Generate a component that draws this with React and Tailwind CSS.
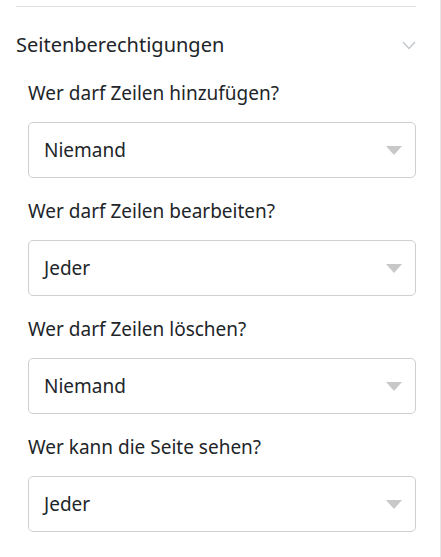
import React from 'react';

const fields = [
  { label: 'Wer darf Zeilen hinzufügen?', value: 'Niemand' },
  { label: 'Wer darf Zeilen bearbeiten?', value: 'Jeder' },
  { label: 'Wer darf Zeilen löschen?', value: 'Niemand' },
  { label: 'Wer kann die Seite sehen?', value: 'Jeder' },
];

const Select = ({ value }) => (
  <div className="flex h-[56px] items-center justify-between rounded-[5px] border border-[#cfcfcf] bg-white pl-[15px] pr-[13px]">
    <span className="text-[19px] leading-none text-[#212529]">{value}</span>
    <svg width="16" height="9" viewBox="0 0 16 9">
      <path d="M0 0 H16 L8 9 Z" fill="#c8c8c8" />
    </svg>
  </div>
);

const App = () => {
  return (
    <div
      className="h-[557px] w-[441px] border-r border-[#e6e6e6] bg-white pl-4 pr-[24px]"
      style={{ fontFamily: '"Noto Sans", sans-serif' }}
    >
      <div className="pt-[6px]">
        <div className="border-t border-[#e2e2e2]" />
      </div>
      <div className="mt-[23px] flex h-[30px] items-center justify-between">
        <h2 className="text-[20px] font-normal text-[#212529]">Seitenberechtigungen</h2>
        <svg width="14" height="9" viewBox="0 0 14 9">
          <path d="M1 1 L7 7.5 L13 1" fill="none" stroke="#c2c7cc" strokeWidth="1.4" />
        </svg>
      </div>
      <div className="pl-3">
        {fields.map((f) => (
          <div key={f.label} className="mt-[20px]">
            <label className="mb-[15px] block text-[19px] leading-[27px] text-[#212529]">{f.label}</label>
            <Select value={f.value} />
          </div>
        ))}
      </div>
    </div>
  );
};

export default App;
